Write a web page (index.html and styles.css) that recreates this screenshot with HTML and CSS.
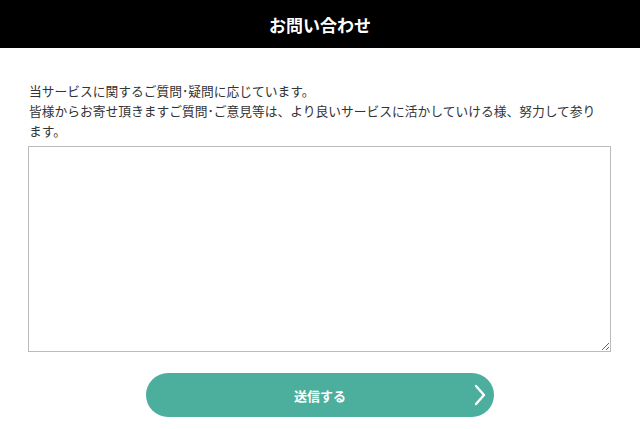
FILE: index.html
```html
<!DOCTYPE html>
<html lang="ja">

<head>
    <meta charset="UTF-8">
    <title>お問い合わせ</title>
    <link rel="stylesheet" href="styles.css">
</head>

<body>
    <header class="head">
        <h1>お問い合わせ</h1>
    </header>
    <form class="contact">
        <p class="lead">当サービスに関するご質問･疑問に応じています。<br>皆様からお寄せ頂きますご質問･ご意見等は、より良いサービスに活かしていける様、努力して参り<span class="nobr">ます。</span></p>
        <textarea class="msg" name="msg"></textarea>
        <button type="button" class="send">
            <span>送信する</span>
            <svg class="arrow" width="12" height="22" viewBox="0 0 12 22"><path d="M2 2 L10 11 L2 20" fill="none" stroke="#fff" stroke-width="2.4" stroke-linecap="round" stroke-linejoin="round"/></svg>
        </button>
    </form>
</body>

</html>
```

FILE: styles.css
```css
* {
    box-sizing: border-box;
}

body {
    margin: 0;
    background: #fff;
    color: #333;
    font-family: "Noto Sans CJK JP", "Noto Sans", sans-serif;
}

.head {
    height: 48px;
    background: #000;
    display: flex;
    align-items: center;
    justify-content: center;
}

.head h1 {
    margin: 0;
    color: #fff;
    font-size: 17px;
    font-weight: bold;
}

.contact {
    padding: 33px 29px 0 29px;
    display: flex;
    flex-direction: column;
    align-items: center;
}

.lead {
    margin: 0;
    width: 100%;
    font-size: 12.75px;
    line-height: 20px;
    line-break: strict;
}

.nobr {
    white-space: nowrap;
}

.msg {
    display: block;
    width: 583px;
    height: 206px;
    margin: 5px 0 0 -1px;
    border: 1px solid #bbb;
    resize: vertical;
}

.send {
    position: relative;
    margin-top: 21px;
    width: 348px;
    height: 44px;
    border: none;
    border-radius: 22px;
    background: #4caf9e;
    color: #fff;
    font-family: inherit;
    font-size: 13px;
    font-weight: bold;
    cursor: pointer;
}

.send .arrow {
    position: absolute;
    right: 8px;
    top: 11px;
}
```
